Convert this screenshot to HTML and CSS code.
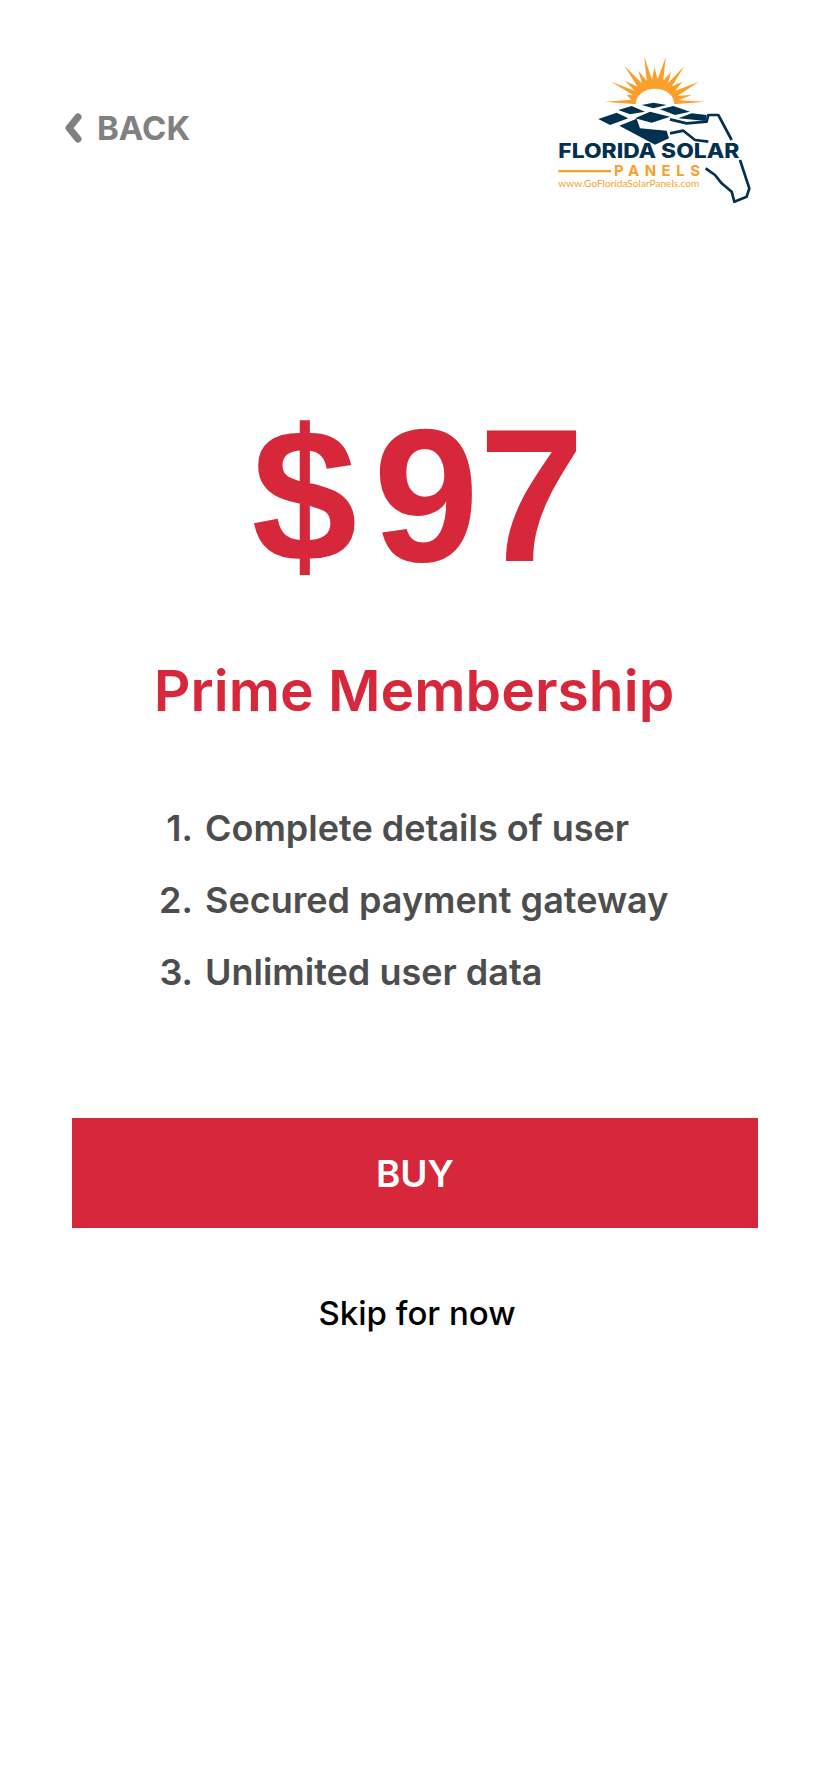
FILE: index.html
```html
<!DOCTYPE html>
<html lang="en">
<head>
    <meta charset="UTF-8">
    <meta name="viewport" content="width=device-width, initial-scale=1.0">
    <title>Prime Membership</title>
    <link rel="stylesheet" href="styles.css">
</head>
<body>
    <header class="top-bar">
        <a class="back-link" href="#">
            <svg class="back-icon" viewBox="0 0 18 30" width="18" height="30">
                <path d="M14 4 L5 15 L14 26" fill="none" stroke="#808080" stroke-width="7" stroke-linecap="round" stroke-linejoin="round"/>
            </svg>
            <span>BACK</span>
        </a>
        <svg class="logo" viewBox="0 0 720 540" width="240" height="180">
            <polygon fill="#f99f2a" points="195,185 274,179 260,165 278,164 213,125 284,152 255,122 293,140 253,77 306,130 295,92 320,122 313,50 336,119 343,82 353,118 377,52 370,122 393,95 384,130 433,78 396,139 427,125 406,152 477,125 413,167 455,165 416,181 495,185 410,192 280,192"/>
            <path fill="#fff" d="M287 192 a58 46 0 0 1 116 0 z"/>
            <g fill="#02304f">
                <polygon points="305,195 340,188 380,195 340,205"/>
                <polygon points="235,210 275,198 315,215 270,223"/>
                <polygon points="360,208 400,198 450,215 405,225"/>
                <polygon points="175,237 230,218 265,235 210,255"/>
                <polygon points="285,235 330,215 390,230 335,248"/>
                <polygon points="415,235 455,220 500,225 497,243"/>
                <polygon points="238,257 290,236 300,265 380,272 387,295 345,314"/>
            </g>
            <path d="M390 238 L440 250 L500 245 L505 225 L535 225 L575 300 M390 280 L430 272 L465 300 L505 305 M600 360 L628 445 L620 470 L583 485 L575 455 L545 430 L525 405 L497 385" fill="none" stroke="#02304f" stroke-width="8" stroke-linejoin="round"/>
            <text class="logo-name" x="55" y="355" textLength="543" lengthAdjust="spacingAndGlyphs">FLORIDA SOLAR</text>
            <rect class="logo-rule" x="55" y="390" width="158" height="7"/>
            <text class="logo-panels" x="222" y="408" textLength="258">PANELS</text>
            <text class="logo-url" x="55" y="442" textLength="423" lengthAdjust="spacingAndGlyphs">www.GoFloridaSolarPanels.com</text>
        </svg>
    </header>

    <main class="offer">
        <div class="price"><span class="price-sign">$</span>97</div>
        <h1 class="plan-name">Prime Membership</h1>
        <ol class="perks">
            <li><span class="perk-num">1.</span>Complete details of user</li>
            <li><span class="perk-num">2.</span>Secured payment gateway</li>
            <li><span class="perk-num">3.</span>Unlimited user data</li>
        </ol>
        <button class="buy-button">BUY</button>
        <a class="skip-link" href="#">Skip for now</a>
    </main>
</body>
</html>
```

FILE: styles.css
```css
body {
    margin: 0;
    background-color: #ffffff;
    font-family: Inter, "Noto Sans", sans-serif;
}
a {
    text-decoration: none;
}
.top-bar {
    display: flex;
    justify-content: space-between;
    align-items: flex-start;
    padding: 40px 48px 0 64px;
}
.back-link {
    display: flex;
    align-items: center;
    gap: 15px;
    margin-top: 71px;
    color: #808080;
    font-size: 33px;
    font-weight: 700;
    line-height: 34px;
}
.logo-name {
    font-size: 60px;
    font-weight: 800;
    fill: #02304f;
}
.logo-rule {
    fill: #f99f2a;
}
.logo-panels {
    font-size: 45px;
    font-weight: 700;
    fill: #f99f2a;
}
.logo-url {
    font-family: Lato, sans-serif;
    font-size: 27px;
    fill: #f99f2a;
}
.offer {
    display: flex;
    flex-direction: column;
    align-items: center;
}
.price {
    margin: 170px 0 0 8px;
    color: #d7273a;
    font-family: "Liberation Sans", Arial, sans-serif;
    font-size: 190px;
    font-weight: 700;
    line-height: 210px;
}
.price-sign {
    margin-right: 16px;
}
.plan-name {
    margin: 56px 0 0;
    color: #d7273a;
    font-size: 57px;
    font-weight: 600;
    line-height: 70px;
}
.perks {
    list-style: none;
    align-self: flex-start;
    margin: 66px 0 0;
    padding: 0;
    color: #4d4d4d;
    font-size: 36px;
    font-weight: 600;
}
.perks li {
    display: flex;
    height: 72px;
    align-items: center;
}
.perk-num {
    width: 205px;
    padding-right: 12px;
    box-sizing: border-box;
    text-align: right;
}
.buy-button {
    align-self: flex-start;
    width: 686px;
    height: 110px;
    margin: 110px 0 0 72px;
    border: none;
    background-color: #d7273a;
    color: #ffffff;
    font-family: inherit;
    font-size: 37px;
    font-weight: 600;
}
.skip-link {
    margin: 64px 0 0 6px;
    color: #000000;
    font-size: 33px;
    font-weight: 500;
    line-height: 42px;
}
```
